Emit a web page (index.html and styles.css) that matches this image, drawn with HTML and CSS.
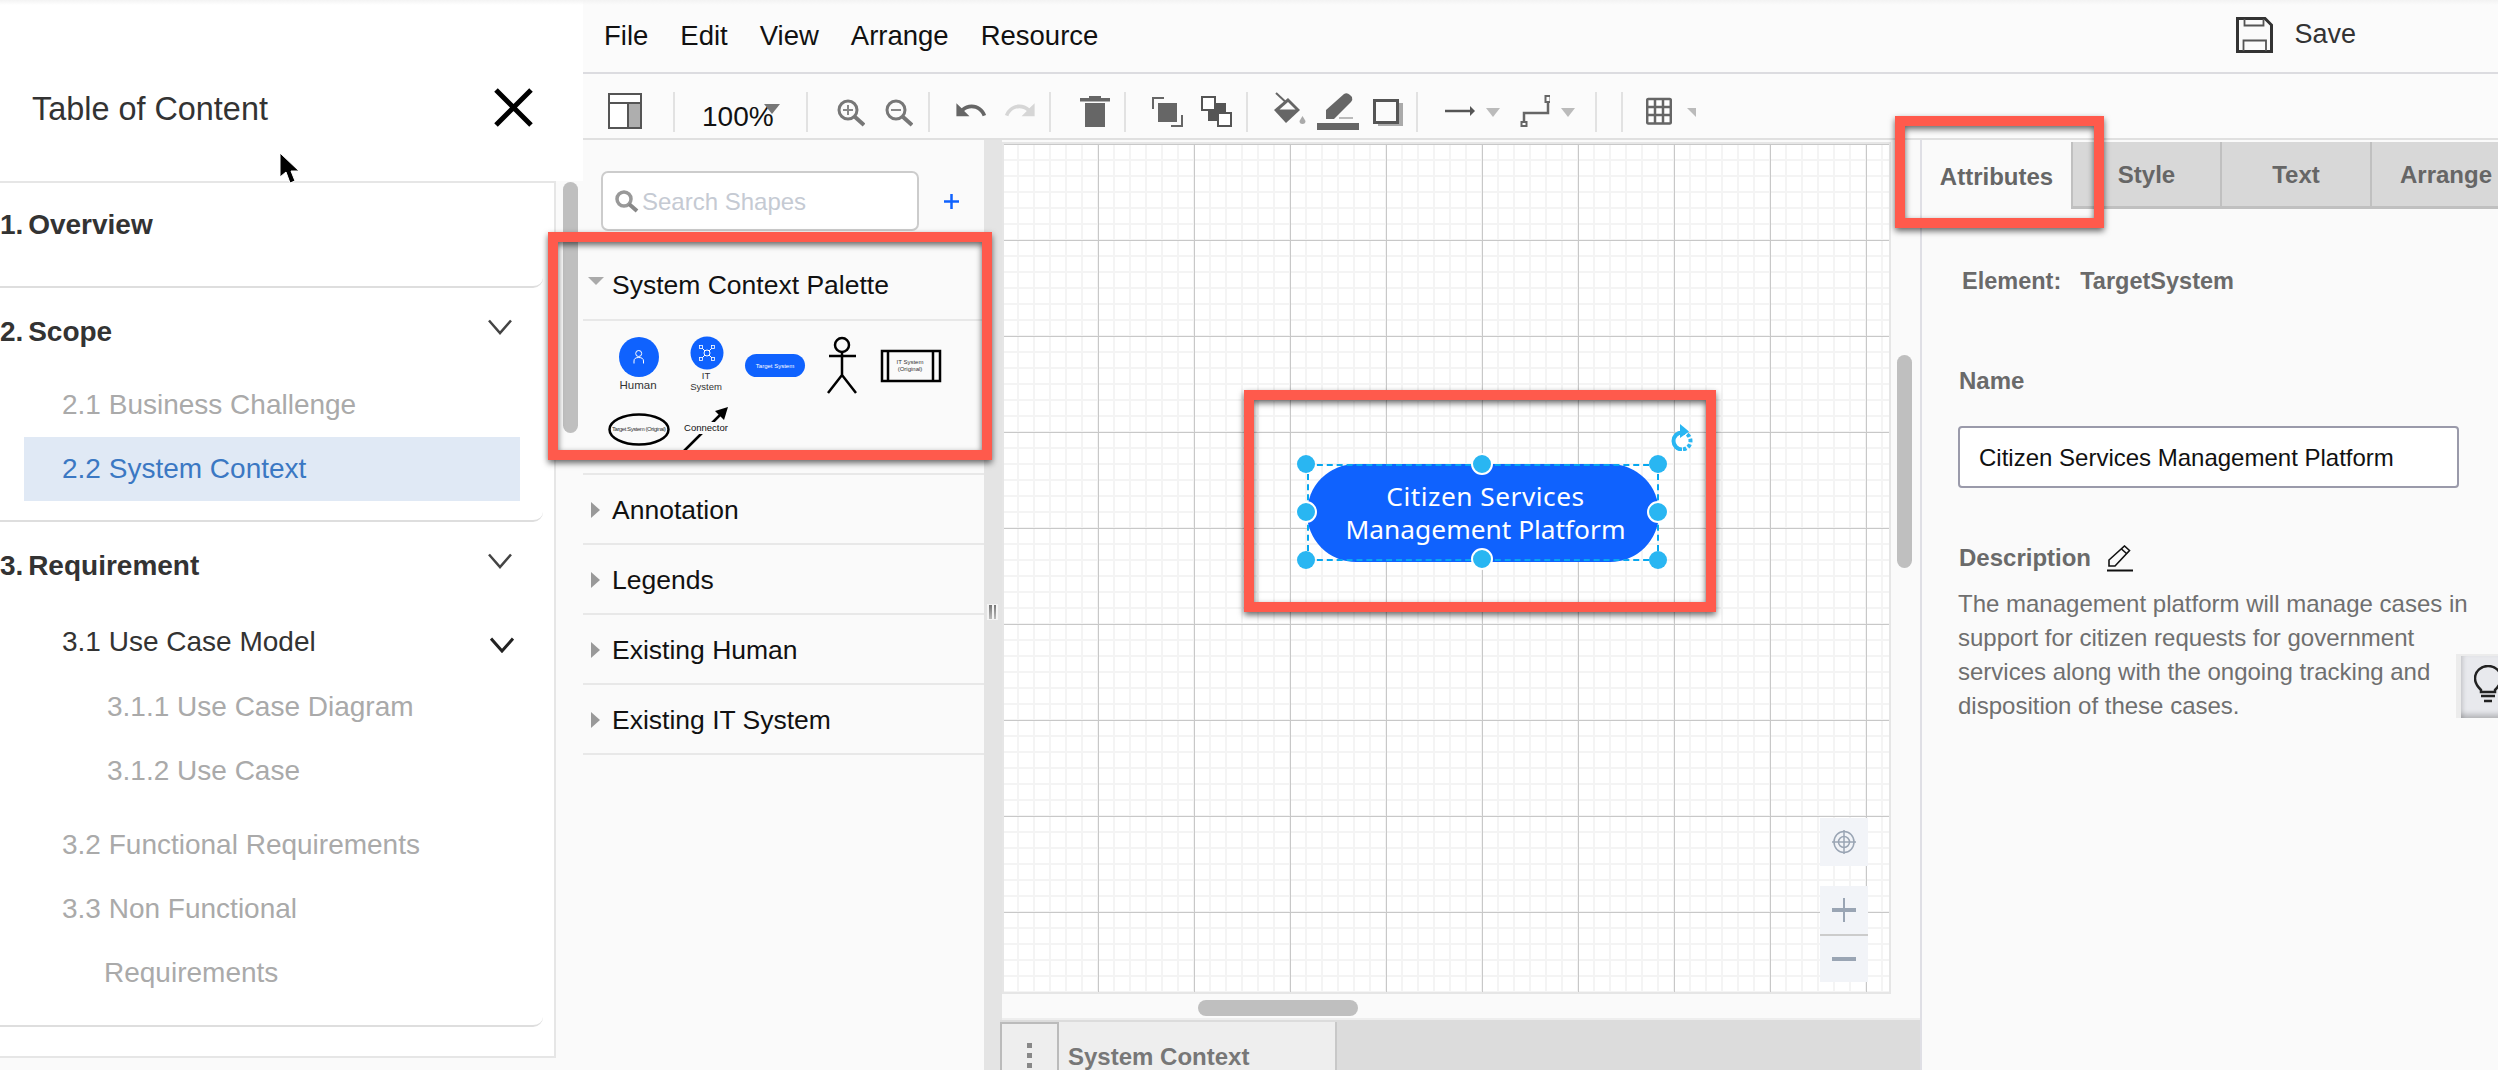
FILE: index.html
```html
<!DOCTYPE html>
<html lang="en">
<head>
    <meta charset="UTF-8">
    <meta name="viewport" content="width=device-width, initial-scale=1.0">
    <title>System Context Editor</title>
    <link rel="stylesheet" href="styles.css">
</head>
<body>
    <aside class="toc">
        <div class="toc-head">
            <span class="toc-title">Table of Content</span>
            <svg class="toc-close" width="39" height="39" viewBox="0 0 39 39"><path d="M2 2L37 37M37 2L2 37" stroke="#000" stroke-width="5" fill="none"/></svg>
        </div>
        <div class="toc-body">
            <nav class="toc-list">
                <section class="toc-section toc-first">
                    <div class="toc-heading"><span>1. Overview</span></div>
                </section>
                <section class="toc-section toc-second">
                    <div class="toc-heading">
                        <span>2. Scope</span>
                        <svg class="chevron" width="24" height="16" viewBox="0 0 24 16"><path d="M1 1.5L12 14L23 1.5" stroke="#444" stroke-width="2.5" fill="none"/></svg>
                    </div>
                    <div class="toc-item toc-gap">2.1 Business Challenge</div>
                    <div class="toc-item toc-active">2.2 System Context</div>
                </section>
                <section class="toc-section toc-third">
                    <div class="toc-heading">
                        <span>3. Requirement</span>
                        <svg class="chevron" width="24" height="16" viewBox="0 0 24 16"><path d="M1 1.5L12 14L23 1.5" stroke="#444" stroke-width="2.5" fill="none"/></svg>
                    </div>
                    <div class="toc-item toc-open">
                        <span>3.1 Use Case Model</span>
                        <svg class="chevron-sub" width="24" height="16" viewBox="0 0 24 16"><path d="M1 1.5L12 14L23 1.5" stroke="#222" stroke-width="3" fill="none"/></svg>
                    </div>
                    <div class="toc-item toc-deep">3.1.1 Use Case Diagram</div>
                    <div class="toc-item toc-deep">3.1.2 Use Case</div>
                    <div class="toc-item toc-gap">3.2 Functional Requirements</div>
                    <div class="toc-item toc-wrap">3.3 Non Functional<br>Requirements</div>
                </section>
            </nav>
            <div class="toc-scroll"><div class="toc-thumb"></div></div>
        </div>
    </aside>

    <main class="editor">
        <header class="menubar">
            <span>File</span>
            <span>Edit</span>
            <span>View</span>
            <span>Arrange</span>
            <span>Resource</span>
            <div class="save">
                <svg width="37" height="36" viewBox="0 0 37 36"><path d="M1.5 1.5H29L35.5 8V34.5H1.5Z" fill="none" stroke="#333" stroke-width="3"/><path d="M8.5 2V8.5H27.5V2M7.5 34V23.5H30V34" fill="none" stroke="#555" stroke-width="1.8"/></svg>
                <span>Save</span>
            </div>
        </header>

        <div class="toolbar">
            <div class="tool-group tg-layout">
                <svg width="34" height="40" viewBox="0 0 34 40"><rect x="1" y="2" width="32" height="34" fill="#fff" stroke="#555" stroke-width="2"/><rect x="20" y="11" width="13" height="25" fill="#aeaeae"/><path d="M1 11H33M20 11V36" stroke="#555" stroke-width="2"/><rect x="1" y="2" width="32" height="34" fill="none" stroke="#555" stroke-width="2"/></svg>
            </div>
            <div class="tool-group tg-zoomlevel">
                <span class="zoom-level">100%<i class="zoom-caret"></i></span>
            </div>
            <div class="tool-group tg-zoom">
                <svg width="28" height="40" viewBox="0 0 28 40"><circle cx="11" cy="18" r="9" fill="none" stroke="#777" stroke-width="3"/><path d="M17.5 24.5L27 33" stroke="#777" stroke-width="4"/><path d="M11 13V23M6 18H16" stroke="#888" stroke-width="2"/></svg>
                <svg width="28" height="40" viewBox="0 0 28 40"><circle cx="11" cy="18" r="9" fill="none" stroke="#777" stroke-width="3"/><path d="M17.5 24.5L27 33" stroke="#777" stroke-width="4"/><path d="M6 18H16" stroke="#888" stroke-width="2"/></svg>
            </div>
            <div class="tool-group tg-undo">
                <svg width="31" height="40" viewBox="0 0 31 40"><path transform="translate(-2.5 1) scale(1.45)" fill="#666" d="M12.5 8c-2.65 0-5.05.99-6.9 2.6L2 7v9h9l-3.62-3.62c1.39-1.16 3.16-1.88 5.12-1.88 3.54 0 6.55 2.31 7.6 5.5l2.37-.78C21.08 11.03 17.15 8 12.5 8z"/></svg>
                <svg width="30" height="40" viewBox="0 0 30 40"><path transform="translate(32.5 1) scale(-1.45 1.45)" fill="#d6d6d6" d="M12.5 8c-2.65 0-5.05.99-6.9 2.6L2 7v9h9l-3.62-3.62c1.39-1.16 3.16-1.88 5.12-1.88 3.54 0 6.55 2.31 7.6 5.5l2.37-.78C21.08 11.03 17.15 8 12.5 8z"/></svg>
            </div>
            <div class="tool-group tg-delete">
                <svg width="30" height="40" viewBox="0 0 30 40"><path fill="#666" d="M9 4H21V6H30V9.500H0V6H9ZM5 11H25V35H5Z"/></svg>
            </div>
            <div class="tool-group tg-order">
                <svg width="31" height="40" viewBox="0 0 31 40"><path d="M1 17V6H12M30 23V34H19" fill="none" stroke="#666" stroke-width="2"/><rect x="6" y="11" width="19" height="19" fill="#666"/></svg>
                <svg width="31" height="40" viewBox="0 0 31 40"><rect x="7" y="11" width="18" height="18" fill="#555"/><rect x="1" y="5" width="13" height="13" fill="#fff" stroke="#555" stroke-width="2"/><rect x="17" y="21" width="13" height="13" fill="#fff" stroke="#555" stroke-width="2"/></svg>
            </div>
            <div class="tool-group tg-format">
                <svg width="34" height="40" viewBox="0 0 34 40"><path d="M2 1L16 14" stroke="#666" stroke-width="2"/><path d="M14 6L26 18L12 31L0 18Z" fill="#666"/><path d="M14 10L21.500 17.500H5.500Z" fill="#fbfbfb"/><path d="M28.500 24L31.500 29A3 3 0 1 1 25.500 29Z" fill="#aaa"/></svg>
                <svg width="47" height="40" viewBox="0 0 47 40"><path fill="#666" d="M9 27L9 18L27 2Q30 0 33 3L35 5Q36 8 34 10L17 27Z"/><path d="M22 26H36" stroke="#bbb" stroke-width="2"/><rect x="0" y="31" width="42" height="7" fill="#666"/></svg>
                <svg width="30" height="40" viewBox="0 0 30 40"><rect x="5" y="11" width="25" height="23" fill="#aaa"/><rect x="1.500" y="8.500" width="23" height="22" fill="#fbfbfb" stroke="#555" stroke-width="3"/></svg>
            </div>
            <div class="tool-group tg-connect">
                <svg width="30" height="40" viewBox="0 0 30 40"><path d="M0 19H27" stroke="#555" stroke-width="2.5"/><path d="M25 14L30 19L25 24Z" fill="#555"/></svg>
                <i class="tool-caret"></i>
                <svg width="30" height="40" viewBox="0 0 30 40"><path d="M4 30V21H28V10" fill="none" stroke="#666" stroke-width="2.500"/><rect x="25.500" y="4" width="5" height="6" fill="#fff" stroke="#666" stroke-width="2"/><rect x="1.500" y="30" width="5" height="4" fill="#fff" stroke="#666" stroke-width="2"/></svg>
                <i class="tool-caret tool-caret-end"></i>
            </div>
            <div class="tool-group tg-empty"></div>
            <div class="tool-group tg-table">
                <svg width="26" height="40" viewBox="0 0 26 40"><rect x="1.200" y="7" width="23.600" height="24.500" rx="1" fill="#fff" stroke="#666" stroke-width="2.500"/><path d="M9 7V31M17 7V31M1 15H25M1 23H25" stroke="#666" stroke-width="2.500"/></svg>
                <i class="tool-caret tool-caret-small"></i>
            </div>
        </div>

        <div class="workspace">
            <div class="palette">
                <div class="search-row">
                    <div class="search-box">
                        <svg width="24" height="23" viewBox="0 0 24 23"><circle cx="9" cy="9" r="7" fill="none" stroke="#999" stroke-width="3.500"/><path d="M14 14L22 21" stroke="#888" stroke-width="4"/></svg>
                        <span>Search Shapes</span>
                    </div>
                    <svg width="15" height="15" viewBox="0 0 15 15"><path d="M7.500 0V15M0 7.500H15" stroke="#0f62fe" stroke-width="2.500"/></svg>
                </div>
                <div class="palette-head palette-head-open"><i class="tri-down"></i>System Context Palette</div>
                <div class="shape-tray">
                    <svg width="400" height="150" viewBox="583 321 400 150">
                        <circle cx="639" cy="357" r="20" fill="#0f62fe"/>
                        <circle cx="638.700" cy="353.500" r="3" fill="none" stroke="#fff" stroke-width="1"/>
                        <path d="M634 363.500V361Q634 357.500 638.700 357.500Q643.500 357.500 643.500 361V363.500" fill="none" stroke="#fff" stroke-width="1"/>
                        <text x="638" y="389" class="tray-label" text-anchor="middle">Human</text>

                        <circle cx="707" cy="353" r="16.500" fill="#0f62fe"/>
                        <path d="M701 347L713 359M713 347L701 359" stroke="#fff" stroke-width="1"/>
                        <circle cx="707" cy="353" r="3" fill="#0f62fe" stroke="#fff"/>
                        <rect x="699.500" y="345.500" width="3" height="3" fill="#0f62fe" stroke="#fff" stroke-width=".8"/>
                        <rect x="711.500" y="345.500" width="3" height="3" fill="#0f62fe" stroke="#fff" stroke-width=".8"/>
                        <rect x="699.500" y="357.500" width="3" height="3" fill="#0f62fe" stroke="#fff" stroke-width=".8"/>
                        <rect x="711.500" y="357.500" width="3" height="3" fill="#0f62fe" stroke="#fff" stroke-width=".8"/>
                        <text x="706" y="379" class="tray-small" text-anchor="middle">IT</text>
                        <text x="706" y="390" class="tray-small" text-anchor="middle">System</text>

                        <rect x="745" y="354" width="60" height="23" rx="11.500" fill="#0f62fe"/>
                        <text x="775" y="367.500" class="tray-tiny tray-white" text-anchor="middle">Target System</text>

                        <circle cx="842" cy="345" r="7" fill="none" stroke="#000" stroke-width="2.500"/>
                        <path d="M842 352V375M829 356H856M828 393L842 375L856 393" fill="none" stroke="#000" stroke-width="2.500"/>

                        <rect x="882" y="351" width="58" height="30" fill="none" stroke="#000" stroke-width="2.500"/>
                        <path d="M888 351V381M933 351V381" stroke="#000" stroke-width="2.500"/>
                        <text x="910" y="363.500" class="tray-tiny" text-anchor="middle">IT System</text>
                        <text x="910" y="370.500" class="tray-tiny" text-anchor="middle">(Original)</text>

                        <ellipse cx="639" cy="429.500" rx="29.500" ry="15" fill="none" stroke="#000" stroke-width="2.500"/>
                        <text x="639" y="431" class="tray-tiny" text-anchor="middle" textLength="54">Target System (Original)</text>

                        <path d="M684 451L722 413" stroke="#000" stroke-width="2.500"/>
                        <path d="M728 407L715 411L724 420Z" fill="#000"/>
                        <rect x="683" y="422" width="47" height="12" fill="#fafafa"/>
                        <text x="706" y="431" class="tray-connector" text-anchor="middle">Connector</text>
                    </svg>
                </div>
                <div class="palette-head"><i class="tri-right"></i>Annotation</div>
                <div class="palette-head"><i class="tri-right"></i>Legends</div>
                <div class="palette-head"><i class="tri-right"></i>Existing Human</div>
                <div class="palette-head"><i class="tri-right"></i>Existing IT System</div>
            </div>

            <div class="splitter"><div class="splitter-grip"><i></i><i></i></div></div>

            <div class="center">
                <div class="canvas-row">
                    <div class="canvas">
                        <div class="shape"><span class="shape-first">Citizen Services</span><span>Management Platform</span></div>
                        <div class="selection"></div>
                        <i class="handle h-tl"></i>
                        <i class="handle handle-rim h-tc"></i>
                        <i class="handle h-tr"></i>
                        <i class="handle handle-rim h-ml"></i>
                        <i class="handle handle-rim h-mr"></i>
                        <i class="handle h-bl"></i>
                        <i class="handle handle-rim h-bc"></i>
                        <i class="handle h-br"></i>
                        <svg class="rotate" width="22" height="27" viewBox="0 0 22 27"><path d="M11 8.500A8.500 8.500 0 0 0 11 25.500" fill="none" stroke="#29b6f2" stroke-width="4"/><path d="M11 8.500A8.500 8.500 0 0 1 11 25.500" fill="none" stroke="#29b6f2" stroke-width="4" stroke-dasharray="3.500 2"/><path d="M9 0L18 7.500L9 14Z" fill="#29b6f2"/></svg>
                        <div class="canvas-ctl ctl-target">
                            <svg width="26" height="26" viewBox="0 0 26 26"><g fill="none" stroke="#9aa5b4" stroke-width="1.500"><ellipse cx="13" cy="13" rx="10" ry="10.500"/><circle cx="13" cy="13" r="5.500"/><path d="M13 1V25M1 13H25"/></g></svg>
                        </div>
                        <div class="canvas-ctl ctl-zoom">
                            <div class="ctl-btn"><svg width="24" height="24" viewBox="0 0 24 24"><path d="M12 0V24" stroke="#9aa5b4" stroke-width="2"/><path d="M0 12H24" stroke="#9aa5b4" stroke-width="4"/></svg></div>
                            <div class="ctl-btn"><svg width="24" height="4" viewBox="0 0 24 4"><path d="M0 2H24" stroke="#9aa5b4" stroke-width="4"/></svg></div>
                        </div>
                    </div>
                    <div class="vscroll"><div class="vthumb"></div></div>
                </div>
                <div class="hscroll"><div class="hthumb"></div></div>
                <div class="tabbar">
                    <div class="tab-menu"><i></i><i></i><i></i></div>
                    <div class="tab-name">System Context</div>
                </div>
            </div>

            <div class="props">
                <div class="prop-tabs">
                    <div class="prop-tab prop-tab-active">Attributes</div>
                    <div class="prop-tab">Style</div>
                    <div class="prop-tab">Text</div>
                    <div class="prop-tab">Arrange</div>
                </div>
                <div class="prop-body">
                    <div class="prop-element"><span>Element:</span><span>TargetSystem</span></div>
                    <div class="prop-label prop-name">Name</div>
                    <div class="prop-input">Citizen Services Management Platform</div>
                    <div class="prop-label prop-desc">
                        <span>Description</span>
                        <svg width="26" height="27" viewBox="0 0 26 27"><path d="M2 21V15L17.500 1L22.500 5.500L8 21Z" fill="none" stroke="#111" stroke-width="1.600"/><path d="M14.500 4L19.500 8.500" stroke="#111" stroke-width="1.600"/><path d="M0 25.500H26" stroke="#111" stroke-width="2"/></svg>
                    </div>
                    <p class="prop-text">The management platform will manage cases in<br>support for citizen requests for government<br>services along with the ongoing tracking and<br>disposition of these cases.</p>
                </div>
            </div>
        </div>
    </main>

    <div class="hint">
        <svg width="38" height="38" viewBox="0 0 38 38"><path d="M7 25C3 21 1 17.500 1 13.500C1 6 7.500 1 14 1C21 1 27 6 27 13.500C27 17.500 25 21 21 25V27H7Z" fill="none" stroke="#222" stroke-width="2.500"/><path d="M7 31H21M10 36H18" stroke="#222" stroke-width="2.500"/></svg>
    </div>

    <div class="callout callout-palette"></div>
    <div class="callout callout-shape"></div>
    <div class="callout callout-tab"></div>

    <svg class="cursor" width="21" height="32" viewBox="0 0 21 32"><path d="M1 1V25L7 20L11 31L16 29L12 19H20Z" fill="#000" stroke="#fff" stroke-width="1"/></svg>
</body>
</html>
```

FILE: styles.css
```css
* {
    box-sizing: border-box;
}

body {
    font-family: "Liberation Sans", Arial, sans-serif;
    background-color: #fafafa;
    color: #333;
    display: flex;
    width: 2498px;
    height: 1070px;
    margin: 0;
    overflow: hidden;
    position: relative;
}

body::before {
    content: "";
    position: absolute;
    top: 0;
    left: 0;
    right: 0;
    height: 5px;
    background: linear-gradient(#f3f3f3, rgba(243, 243, 243, 0));
    z-index: 2;
}

i {
    display: block;
}

/* table of content */

.toc {
    width: 583px;
    flex: none;
    display: flex;
    flex-direction: column;
    background-color: #fff;
}

.toc-head {
    height: 181px;
    padding: 77px 50px 0 32px;
    display: flex;
    justify-content: space-between;
    align-items: flex-start;
}

.toc-title {
    font-size: 32.400px;
    line-height: 64px;
    color: #333;
}

.toc-close {
    margin-top: 11px;
}

.toc-body {
    flex: 1;
    display: flex;
    background-color: #fafafa;
    padding-bottom: 12px;
}

.toc-list {
    width: 556px;
    background-color: #fff;
    border: solid #e6e6e6;
    border-width: 2px 2px 2px 0;
    overflow: hidden;
}

.toc-section {
    border-bottom: 2px solid #dedede;
    border-bottom-right-radius: 10px;
    width: 543px;
}

.toc-first {
    padding: 10px 0 29px;
}

.toc-second {
    padding: 12px 0 19px;
}

.toc-third {
    padding: 12px 0 20px;
}

.toc-heading {
    height: 64px;
    padding-right: 31px;
    display: flex;
    justify-content: space-between;
    align-items: center;
    font-size: 28px;
    font-weight: bold;
    word-spacing: -3px;
}

.chevron {
    margin-bottom: 10px;
}

.toc-item {
    padding-left: 62px;
    font-size: 28px;
    line-height: 64px;
    color: #aaa;
}

.toc-gap {
    margin-top: 10px;
}

.toc-second .toc-gap {
    margin-top: 9px;
}

.toc-active {
    margin-left: 24px;
    width: 496px;
    padding-left: 38px;
    background-color: #e0e9f5;
    color: #3b78c3;
}

.toc-open {
    margin: 12px 0 1px;
    padding-right: 29px;
    display: flex;
    justify-content: space-between;
    align-items: center;
    color: #333;
}

.chevron-sub {
    margin-top: 6px;
}

.toc-deep {
    padding-left: 107px;
}

.toc-wrap {
    padding-left: 104px;
    text-indent: -42px;
}

.toc-scroll {
    padding: 1px 0 0 7px;
}

.toc-thumb {
    width: 15px;
    height: 251px;
    border-radius: 8px;
    background-color: #bfbfbf;
}

/* editor */

.editor {
    flex: 1;
    display: flex;
    flex-direction: column;
    min-width: 0;
}

.menubar {
    height: 74px;
    flex: none;
    padding: 0 142px 0 21px;
    display: flex;
    align-items: center;
    gap: 32px;
    font-size: 27.500px;
    color: #111;
    background-color: #fbfbfb;
    border-bottom: 2px solid #dcdce0;
}

.save {
    margin: 0 0 3px auto;
    display: flex;
    align-items: center;
    gap: 21px;
    font-size: 27px;
    color: #333;
}

.toolbar {
    height: 66px;
    flex: none;
    padding-top: 12px;
    display: flex;
    align-items: center;
    background-color: #fbfbfb;
    border-bottom: 2px solid #e0e0e0;
}

.tool-group {
    height: 40px;
    display: flex;
    align-items: center;
    border-right: 2px solid #e2e2e2;
}

.tg-layout {
    padding: 0 31px 0 25px;
}

.tg-zoomlevel {
    padding: 0 32px 0 27px;
}

.tg-zoom {
    padding: 0 15px 0 29px;
    gap: 20px;
}

.tg-undo {
    padding: 0 14px 0 26px;
    gap: 18px;
}

.tg-delete {
    padding: 0 14px 0 29px;
}

.tg-order {
    padding: 0 14px 0 26px;
    gap: 18px;
}

.tg-format {
    padding: 0 13px 0 26px;
    gap: 9px;
}

.tg-connect {
    padding: 0 0 0 27px;
}

.tg-empty {
    width: 26px;
}

.tg-table {
    padding-left: 23px;
    border-right: none;
}

.zoom-level {
    position: relative;
    margin-top: 10px;
    font-size: 28px;
    color: #111;
}

.zoom-caret {
    position: absolute;
    left: 62px;
    top: 3px;
    width: 0;
    height: 0;
    border: solid transparent;
    border-width: 10px 8.5px 0;
    border-top-color: #777;
}

.tool-caret {
    width: 0;
    height: 0;
    margin: 0 20px 0 11px;
    border: solid transparent;
    border-width: 9px 7px 0;
    border-top-color: #bbb;
}

.tool-caret-small {
    margin: 0 0 0 15px;
    border-width: 9px 0 0 9px;
    border-color: #bbb transparent transparent;
}

.workspace {
    flex: 1;
    display: flex;
    min-height: 0;
}

/* palette */

.palette {
    width: 401px;
    flex: none;
    background-color: #fafafa;
}

.search-row {
    padding: 31px 0 0 18px;
    display: flex;
    align-items: center;
    gap: 25px;
}

.search-box {
    width: 318px;
    height: 60px;
    padding-left: 12px;
    display: flex;
    align-items: center;
    gap: 3px;
    background-color: #fff;
    border: 2px solid #ccc;
    border-radius: 7px;
    font-size: 24px;
    color: #c5cad3;
}

.search-box span {
    padding-top: 2px;
}

.palette-head {
    height: 70px;
    padding: 2px 0 0 8px;
    display: flex;
    align-items: center;
    gap: 12px;
    font-size: 26.500px;
    color: #111;
    border-bottom: 2px solid #e8e8e8;
}

.palette-head-open {
    height: 90px;
    padding: 20px 0 0 5px;
    gap: 8px;
}

.tri-down {
    width: 0;
    height: 0;
    margin-top: -8px;
    border: solid transparent;
    border-width: 8px 8px 0;
    border-top-color: #aaa;
}

.tri-right {
    width: 0;
    height: 0;
    border: solid transparent;
    border-width: 8px 0 8px 9px;
    border-left-color: #999;
}

.shape-tray {
    height: 154px;
    border-bottom: 2px solid #e8e8e8;
    overflow: hidden;
}

.shape-tray svg {
    display: block;
}

.tray-label {
    font-size: 11.500px;
    fill: #333;
}

.tray-small {
    font-size: 9.500px;
    fill: #333;
}

.tray-tiny {
    font-size: 6px;
    fill: #333;
}

.tray-white {
    fill: #fff;
}

.tray-connector {
    font-size: 9.500px;
    fill: #111;
}

.splitter {
    width: 18px;
    flex: none;
    padding-top: 464px;
    background-color: #e4e4e4;
}

.splitter-grip {
    width: 11px;
    height: 16px;
    margin-left: 3px;
    padding: 1px 2px;
    display: flex;
    gap: 2px;
    background-color: #f4f4f4;
}

.splitter-grip i {
    width: 3px;
    background: linear-gradient(#777, #bbb);
}

/* canvas */

.center {
    width: 918px;
    flex: none;
    display: flex;
    flex-direction: column;
}

.canvas-row {
    height: 854px;
    flex: none;
    display: flex;
}

.canvas {
    position: relative;
    width: 889px;
    height: 852px;
    margin-top: 2px;
    border: 2px solid #e6e6e6;
    overflow: hidden;
    background-color: #fff;
    background-image:
        linear-gradient(to right, #c8c8c8 1px, transparent 1px),
        linear-gradient(to bottom, #c8c8c8 1px, transparent 1px),
        linear-gradient(to right, #f4f4f4 2px, transparent 2px),
        linear-gradient(to bottom, #f4f4f4 2px, transparent 2px);
    background-size: 96px 96px, 96px 96px, 16px 16px, 16px 16px;
    background-position: 94px 0, 0 0, 13px 0, 0 -1px;
}

.shape {
    position: absolute;
    left: 303px;
    top: 320px;
    width: 352px;
    height: 98px;
    padding-left: 5px;
    display: flex;
    flex-direction: column;
    align-items: center;
    justify-content: center;
    font-family: "Noto Sans", sans-serif;
    font-size: 26.300px;
    line-height: 33px;
    color: #fff;
    background-color: #0f62fe;
    border-radius: 49px;
}

.shape-first {
    letter-spacing: 0.5px;
}

.selection {
    position: absolute;
    left: 303px;
    top: 320px;
    width: 352px;
    height: 97px;
    border: 2px dashed #06a7f0;
}

.handle {
    position: absolute;
    width: 18px;
    height: 18px;
    border-radius: 50%;
    background-color: #29b6f2;
}

.handle-rim {
    width: 22px;
    height: 22px;
    border: 2px solid #fff;
}

.h-tl { left: 293px; top: 311px; }
.h-tc { left: 467px; top: 309px; }
.h-tr { left: 645px; top: 311px; }
.h-ml { left: 291px; top: 357px; }
.h-mr { left: 643px; top: 357px; }
.h-bl { left: 293px; top: 407px; }
.h-bc { left: 467px; top: 404px; }
.h-br { left: 645px; top: 407px; }

.rotate {
    position: absolute;
    left: 667px;
    top: 280px;
}

.canvas-ctl {
    position: absolute;
    left: 816px;
    width: 48px;
    background-color: #f2f4f8;
}

.ctl-target {
    top: 674px;
    height: 48px;
    display: flex;
    align-items: center;
    justify-content: center;
}

.ctl-zoom {
    top: 742px;
    height: 96px;
}

.ctl-btn {
    height: 48px;
    display: flex;
    align-items: center;
    justify-content: center;
}

.ctl-btn + .ctl-btn {
    border-top: 2px solid #ccc;
}

.vscroll {
    flex: 1;
    padding: 215px 0 0 6px;
}

.vthumb {
    width: 15px;
    height: 213px;
    border-radius: 8px;
    background-color: #bfbfbf;
}

.hscroll {
    height: 26px;
    flex: none;
    padding: 6px 0 0 196px;
    border-bottom: 2px solid #eee;
}

.hthumb {
    width: 160px;
    height: 16px;
    border-radius: 8px;
    background-color: #bfbfbf;
}

.tabbar {
    flex: 1;
    margin-left: -2px;
    padding-top: 2px;
    display: flex;
    background-color: #dcdcdc;
}

.tab-menu {
    width: 59px;
    padding-top: 19px;
    display: flex;
    flex-direction: column;
    align-items: center;
    gap: 5px;
    background-color: #eee;
    border: solid #bbb;
    border-width: 2px 2px 0;
}

.tab-menu i {
    width: 5px;
    height: 5px;
    background-color: #888;
}

.tab-name {
    width: 278px;
    padding: 21px 0 0 9px;
    font-size: 24px;
    line-height: 28px;
    font-weight: bold;
    color: #777;
    background-color: #eee;
    border-right: 2px solid #c8c8c8;
}

/* properties */

.props {
    flex: 1;
    min-width: 0;
    overflow: hidden;
    border-left: 2px solid #dfdfe5;
    background-color: #fafafa;
}

.prop-tabs {
    height: 69px;
    padding-top: 2px;
    display: grid;
    grid-template-columns: 151px 149px 150px 150px;
}

.prop-tab {
    padding-top: 2px;
    display: flex;
    align-items: center;
    justify-content: center;
    font-size: 24px;
    font-weight: bold;
    color: #666;
    background-color: #d8d8d8;
    border: solid #c0c0c0;
    border-width: 0 2px 3px 0;
}

.prop-tab-active {
    background-color: #fafafa;
    border-color: #fafafa #c0c0c0 #fafafa #fafafa;
    border-bottom: none;
}

.prop-body {
    padding: 56px 0 0 37px;
    color: #6a6a6a;
}

.prop-element {
    margin-left: 3px;
    display: flex;
    gap: 19px;
    font-size: 23.500px;
    line-height: 32px;
    font-weight: bold;
}

.prop-label {
    font-size: 24px;
    line-height: 32px;
    font-weight: bold;
}

.prop-name {
    margin-top: 68px;
}

.prop-input {
    width: 501px;
    height: 62px;
    margin: 29px 0 0 -1px;
    padding: 2px 0 0 19px;
    display: flex;
    align-items: center;
    font-size: 24px;
    color: #111;
    background-color: #fff;
    border: 2px solid #9a9aaa;
    border-radius: 4px;
}

.prop-desc {
    margin-top: 54px;
    display: flex;
    align-items: center;
    gap: 16px;
}

.prop-text {
    margin: 13px 0 0 -1px;
    font-size: 24px;
    line-height: 34px;
    color: #6f6f6f;
    white-space: nowrap;
}

/* things floating over the page */

.hint {
    position: absolute;
    left: 2456px;
    top: 654px;
    width: 42px;
    height: 64px;
    padding: 9px 0 0 13px;
    overflow: hidden;
    background-color: #e8e9ed;
    border-top: 2px solid #ececec;
    border-left: 5px solid #ececec;
    box-shadow: inset 4px 0 4px -2px rgba(0, 0, 0, 0.15), inset 0 -8px 5px -4px rgba(0, 0, 0, 0.2);
}

.callout {
    position: absolute;
    border: 10px solid #ff5a4c;
    filter: drop-shadow(0 3px 3px rgba(0, 0, 0, 0.6));
}

.callout-palette {
    left: 548px;
    top: 232px;
    width: 444px;
    height: 228px;
}

.callout-shape {
    left: 1244px;
    top: 390px;
    width: 472px;
    height: 222px;
}

.callout-tab {
    left: 1895px;
    top: 116px;
    width: 209px;
    height: 112px;
}

.cursor {
    position: absolute;
    left: 279px;
    top: 152px;
}
```
